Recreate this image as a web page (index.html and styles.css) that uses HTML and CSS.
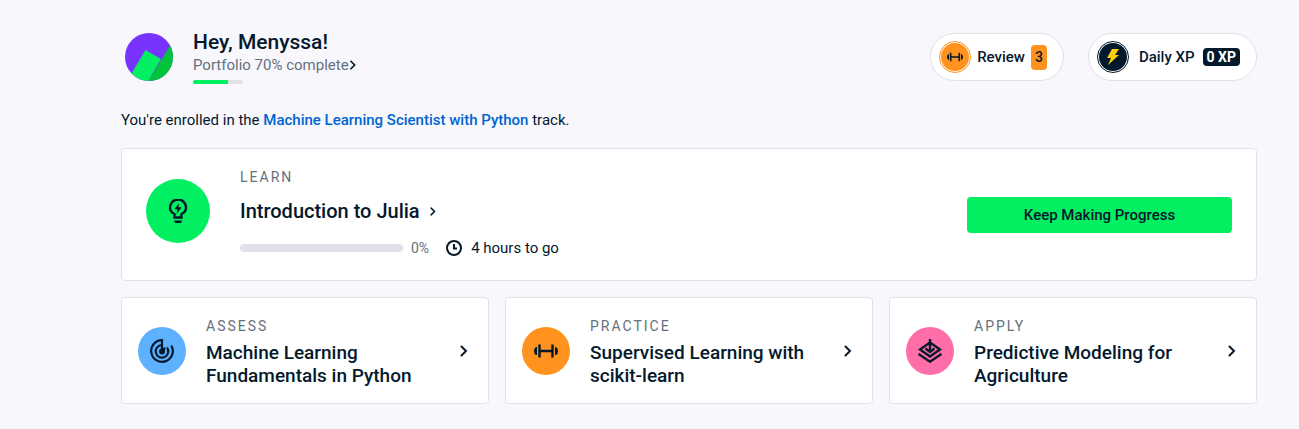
FILE: index.html
```html
<!DOCTYPE html>
<html lang="en">
<head>
<meta charset="utf-8">
<meta name="viewport" content="width=device-width, initial-scale=1">
<title>Learning dashboard</title>
<link rel="stylesheet" href="styles.css">
</head>
<body>
<svg class="sprite" aria-hidden="true">
  <symbol id="dumbbell" viewBox="0 0 24 24"><path d="M6 12h12M5.500 5.500v13M18.500 5.500v13" fill="none" stroke="currentColor" stroke-width="2.400"/><path d="M3 8v8H2Q0 15 0 12T2 8zM21 8v8h1Q24 15 24 12T22 8z" fill="currentColor"/></symbol>
  <symbol id="chevron" viewBox="0 0 8 12"><path d="M1.500 1.500 6 6l-4.500 4.500" fill="none" stroke="currentColor" stroke-width="2" stroke-linecap="round"/></symbol>
</svg>
<main class="dashboard">
  <header class="header">
    <div class="profile">
      <svg class="avatar" viewBox="0 0 48 48" aria-hidden="true">
        <clipPath id="round"><circle cx="24" cy="24" r="24"/></clipPath>
        <g clip-path="url(#round)"><path fill="#7933ff" d="M0 0h48v48H0z"/><path fill="#00c53b" d="M46 11 20 54h32V11z"/><path fill="#03ef62" d="M20.500 17 36 26 20 54 2 48z"/></g>
      </svg>
      <div class="greeting">
        <h1 class="name">Hey, Menyssa!</h1>
        <a class="portfolio" href="#portfolio">Portfolio 70% complete<svg class="chevron chevron-small"><use href="#chevron"/></svg></a>
        <div class="meter"><div class="meter-fill" style="width:70%"></div></div>
      </div>
    </div>
    <div class="pills">
      <button class="pill" type="button">
        <span class="ring ring-orange"><svg class="pill-icon"><use href="#dumbbell"/></svg></span>
        <span class="pill-label">Review</span><span class="count">3</span>
      </button>
      <button class="pill" type="button">
        <span class="ring ring-navy"><svg class="pill-icon" viewBox="0 0 18 18"><path d="M8 1h7l-4 6h4L4 17l3-7H3z" fill="#fcce0d"/></svg></span>
        <span class="pill-label">Daily XP</span><span class="xp">0 XP</span>
      </button>
    </div>
  </header>
  <p class="enrolled">You're enrolled in the <a class="track" href="#track">Machine Learning Scientist with Python</a> track.</p>
  <section class="card learn">
    <div class="disc disc-large green">
      <svg class="icon" viewBox="0 0 24 24" aria-hidden="true"><path d="M8.500 18.500v-3.500C6 14 4 12 4 8.500a8 8 0 0 1 16 0c0 3.500-2 5.500-4.500 6.500v3.500z" fill="none" stroke="currentColor" stroke-width="2.400"/><path d="M8 21.500h8l-1 2.500H9zM13 4 8.500 10l3 .5-1 4.500 5-6.500-3-.5z" fill="currentColor"/></svg>
    </div>
    <div class="learn-body">
      <p class="eyebrow">LEARN</p>
      <h2 class="course"><a class="plain" href="#julia">Introduction to Julia<svg class="chevron chevron-course"><use href="#chevron"/></svg></a></h2>
      <div class="status">
        <div class="progress"></div><span class="percent">0%</span>
        <svg class="clock" viewBox="0 0 16 16" aria-hidden="true"><circle cx="8" cy="8" r="7" fill="none" stroke="currentColor" stroke-width="2"/><path d="M8 4v4.500h3" fill="none" stroke="currentColor" stroke-width="2"/></svg>
        <span class="remaining">4 hours to go</span>
      </div>
    </div>
    <button class="primary" type="button">Keep Making Progress</button>
  </section>
  <div class="cards">
    <a class="card task" href="#assess">
      <span class="disc blue"><svg class="icon" viewBox="0 0 24 24" aria-hidden="true"><g fill="none" stroke="currentColor" stroke-width="2.200"><path d="M12 11V1.200a10.800 10.800 0 1 0 9.300 5.300"/><path d="M12 6a6.300 6.300 0 1 0 5 2.500"/></g><path d="M12 9.500 15.500 8 15 12.500A3 3 0 1 1 12 9.500z" fill="currentColor"/></svg></span>
      <span class="task-body"><span class="eyebrow">ASSESS</span><span class="task-title">Machine Learning Fundamentals in Python</span></span>
      <svg class="chevron"><use href="#chevron"/></svg>
    </a>
    <a class="card task" href="#practice">
      <span class="disc orange"><svg class="icon"><use href="#dumbbell"/></svg></span>
      <span class="task-body"><span class="eyebrow">PRACTICE</span><span class="task-title">Supervised Learning with scikit-learn</span></span>
      <svg class="chevron"><use href="#chevron"/></svg>
    </a>
    <a class="card task" href="#apply">
      <span class="disc pink"><svg class="icon" viewBox="0 0 24 24" aria-hidden="true"><g fill="none" stroke="currentColor" stroke-width="2.400"><path d="M12 0v13M7.500 9.500 12 13l4.500-3.500M12 3.500 2 10.500 12 17.500l10-7z"/><path d="M.500 15 12 22.700 23.500 15"/></g></svg></span>
      <span class="task-body"><span class="eyebrow">APPLY</span><span class="task-title">Predictive Modeling for Agriculture</span></span>
      <svg class="chevron"><use href="#chevron"/></svg>
    </a>
  </div>
</main>
</body>
</html>
```

FILE: styles.css
```css
* { box-sizing: border-box; }
body { margin: 0; background: #f7f7fc; color: #05192d; font: 15px/20px Roboto, "Liberation Sans", sans-serif; }
h1, h2, p { margin: 0; font-weight: 500; }
a { text-decoration: none; color: inherit; }
button { font: inherit; color: inherit; cursor: pointer; border: 0; }
.sprite { position: absolute; width: 0; height: 0; }
.dashboard { padding: 32px 42px 24px 121px; }
.header { display: flex; justify-content: space-between; align-items: flex-start; min-height: 64px; }
.profile { display: flex; gap: 20px; padding-left: 4px; }
.avatar { width: 48px; height: 48px; margin-top: 1px; flex: none; }
.name { font-size: 21px; line-height: 20px; }
.portfolio { display: flex; align-items: center; line-height: 20px; margin-top: 3px; color: #65707c; }
.meter { width: 50px; height: 4px; margin-top: 5px; border-radius: 2px; background: #e1e1e8; overflow: hidden; }
.meter-fill { height: 100%; background: #03ef62; }
.chevron { width: 8px; height: 12px; flex: none; color: #05192d; }
.chevron-small { height: 10px; }
.chevron-course { height: 9px; width: 6px; margin-left: 10px; }
.pills { display: flex; gap: 24px; padding-top: 1px; }
.pill { display: flex; align-items: center; height: 48px; padding: 0 16px 0 8px; border: 1px solid #e1e1ea; border-radius: 24px; background: #fff; font-weight: 500; }
.ring { display: grid; place-items: center; width: 32px; height: 32px; border: 1px solid; border-radius: 50%; padding: 1px; background-clip: content-box; }
.ring-orange { border-color: #ff931e; background-color: #ff931e; margin-right: 6px; }
.ring-navy { border-color: #05192d; background-color: #05192d; margin-right: 10px; }
.pill-icon { width: 16px; height: 16px; color: #05192d; }
.ring-navy .pill-icon { width: 18px; height: 18px; }
.count { margin-left: 6px; padding: 2px 4px; font-size: 14px; line-height: 21px; border-radius: 4px; background: #ff931e; }
.xp { margin-left: 8px; padding: 0 4px; font-size: 14px; line-height: 18px; border-radius: 4px; background: #05192d; color: #fff; font-weight: 700; }
.enrolled { margin: 14px 0 18px; font-weight: 400; }
.track { color: #0065d1; font-weight: 500; }
.card { background: #fff; border: 1px solid #e1e1ea; border-radius: 4px; }
.learn { display: flex; align-items: center; padding: 18px 24px; margin-bottom: 16px; }
.disc { display: grid; place-items: center; width: 48px; height: 48px; border-radius: 50%; flex: none; }
.disc-large { width: 64px; height: 64px; margin-bottom: 8px; }
.green { background: #03ef62; }
.blue { background: #5eb1ff; }
.orange { background: #ff931e; }
.pink { background: #ff6ea9; }
.icon { width: 24px; height: 24px; }
.learn-body { flex: 1; margin-left: 30px; padding-bottom: 4px; }
.eyebrow { display: block; color: #65707c; font-size: 14px; font-weight: 400; letter-spacing: 2px; }
.course { font-size: 20px; line-height: 24px; margin-top: 12px; }
.plain { display: inline-flex; align-items: center; }
.status { display: flex; align-items: center; margin-top: 15px; }
.progress { width: 163px; height: 8px; border-radius: 4px; background: #e1e1ea; }
.percent { margin-left: 8px; color: #65707c; font-size: 14px; }
.clock { width: 16px; height: 16px; margin: 0 9px 0 17px; }
.primary { width: 265px; height: 36px; border-radius: 4px; background: #03ef62; font-weight: 500; }
.cards { display: grid; grid-template-columns: repeat(3, 1fr); gap: 16px; }
.task { display: flex; align-items: center; padding: 16px 20px 16px 16px; }
.task-body { flex: 1; margin: 0 24px 0 20px; padding-top: 2px; }
.task-title { display: block; font-size: 19px; line-height: 23px; margin-top: 5px; font-weight: 500; }
```
